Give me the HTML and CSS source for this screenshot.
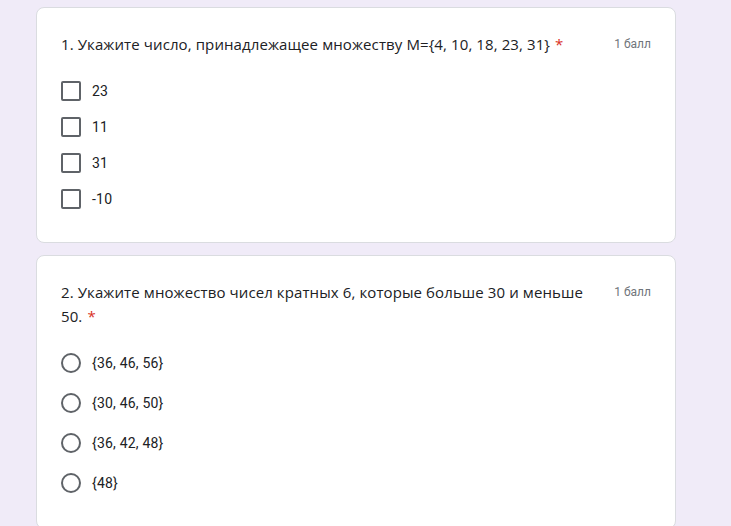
FILE: index.html
```html
<!DOCTYPE html>
<html lang="ru">
<head>
<meta charset="utf-8">
<link rel="stylesheet" href="styles.css">
</head>
<body>
<main class="form">
  <section class="card">
    <div class="q-head">
      <div class="q-title">1. Укажите число, принадлежащее множеству M={4, 10, 18, 23, 31}<span class="req">*</span></div>
      <div class="q-points">1 балл</div>
    </div>
    <div class="options checks">
      <label class="opt"><span class="box"></span><span class="opt-text">23</span></label>
      <label class="opt"><span class="box"></span><span class="opt-text">11</span></label>
      <label class="opt"><span class="box"></span><span class="opt-text">31</span></label>
      <label class="opt"><span class="box"></span><span class="opt-text">-10</span></label>
    </div>
  </section>
  <section class="card">
    <div class="q-head">
      <div class="q-title">2. Укажите множество чисел кратных 6, которые больше 30 и меньше 50.<span class="req">*</span></div>
      <div class="q-points">1 балл</div>
    </div>
    <div class="options radios">
      <label class="opt"><span class="radio"></span><span class="opt-text">{36, 46, 56}</span></label>
      <label class="opt"><span class="radio"></span><span class="opt-text">{30, 46, 50}</span></label>
      <label class="opt"><span class="radio"></span><span class="opt-text">{36, 42, 48}</span></label>
      <label class="opt"><span class="radio"></span><span class="opt-text">{48}</span></label>
    </div>
  </section>
</main>
</body>
</html>
```
FILE: styles.css
```css
html, body {
  margin: 0;
  padding: 0;
  background: #f0ebf8;
}
body {
  font-family: "Open Sans", "Liberation Sans", sans-serif;
  color: #202124;
}
.form {
  display: flex;
  flex-direction: column;
  gap: 12px;
  padding: 7px 0 0 36px;
  width: 640px;
}
.card {
  background: #fff;
  border: 1px solid #dadce0;
  border-radius: 8px;
  padding: 24px 24px 25px 24px;
}
.q-head {
  display: flex;
  align-items: flex-start;
  gap: 24px;
}
.q-title {
  flex: 1;
  font-size: 15px;
  line-height: 24px;
  letter-spacing: 0.1px;
}
.req {
  color: #d93025;
  margin-left: 5px;
}
.q-points {
  font-family: Roboto, "Liberation Sans", sans-serif;
  font-size: 12px;
  line-height: 24px;
  color: #70757a;
  white-space: nowrap;
}
.options {
  display: flex;
  flex-direction: column;
}
.checks {
  padding-top: 17px;
}
.radios {
  padding-top: 15px;
}
.opt {
  display: flex;
  align-items: center;
  gap: 11px;
  font-family: Roboto, "Liberation Sans", sans-serif;
  font-size: 14px;
  letter-spacing: 0.2px;
  color: #202124;
}
.checks .opt {
  height: 36px;
}
.radios .opt {
  height: 40px;
}
.box {
  box-sizing: border-box;
  width: 20px;
  height: 20px;
  border: 2px solid #5f6368;
  border-radius: 2px;
}
.radio {
  box-sizing: border-box;
  width: 20px;
  height: 20px;
  border: 2px solid #5f6368;
  border-radius: 50%;
}
```
